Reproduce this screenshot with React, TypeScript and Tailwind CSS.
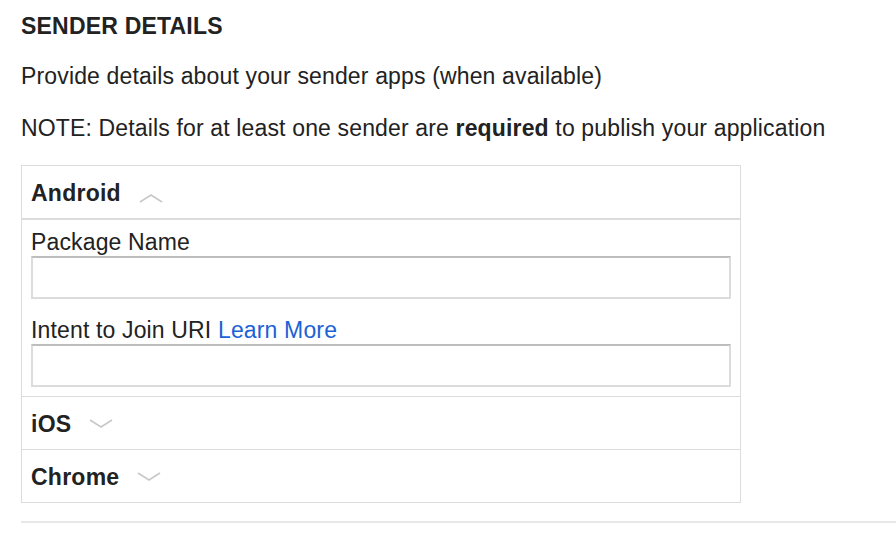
import React from 'react'

const Chevron = ({ up }: { up?: boolean }) => (
  <svg width="24" height="10" viewBox="0 0 24 10" className={up ? 'ml-[18px] mt-[10px]' : 'ml-[18px]'}>
    <polyline
      points={up ? '1,9 12,2 23,9' : '1,1 12,8 23,1'}
      fill="none"
      stroke="#c8c8c8"
      strokeWidth="1.6"
    />
  </svg>
)

const SectionHeader = ({ title, open }: { title: string; open?: boolean }) => (
  <div className="flex items-center h-[52px] px-[9px] pt-[2px]">
    <span className="font-bold text-[23px] leading-[28px] tracking-[0.25px] text-[#222]">{title}</span>
    <Chevron up={open} />
  </div>
)

const TextInput = () => (
  <input
    type="text"
    className="block w-full h-[43px] border-2 border-[#dcdcdc] border-t-[#bdbdbd] bg-white outline-none"
  />
)

const App = () => {
  return (
    <div className="w-[896px] h-[536px] bg-white overflow-hidden font-['Liberation_Sans',Arial,sans-serif] text-[#222]">
      <div className="pl-[21px] pt-[12px]">
        <h2 className="font-bold text-[23px] leading-[28px] tracking-[0.2px]">SENDER DETAILS</h2>
        <p className="text-[23px] leading-[28px] tracking-[0.15px] mt-[22px]">
          Provide details about your sender apps (when available)
        </p>
        <p className="text-[23px] leading-[28px] tracking-[0.15px] mt-[24px]">
          NOTE: Details for at least one sender are <b>required</b> to publish your application
        </p>

        <div className="w-[720px] mt-[23px] border border-[#dcdcdc]">
          <SectionHeader title="Android" open />
          <div className="border-t-2 border-[#dcdcdc] px-[9px] pt-[8px] pb-[9px]">
            <label className="block text-[23px] leading-[28px] tracking-[0.15px]">Package Name</label>
            <TextInput />
            <label className="block text-[23px] leading-[28px] tracking-[0.15px] mt-[17px]">
              Intent to Join URI <a className="text-[#1a62d6]" href="#">Learn More</a>
            </label>
            <TextInput />
          </div>
          <div className="border-t border-[#dcdcdc]">
            <SectionHeader title="iOS" />
          </div>
          <div className="border-t border-[#dcdcdc]">
            <SectionHeader title="Chrome" />
          </div>
        </div>

        <div className="mt-[18px] h-[2px] bg-[#e8e8e8]" />
      </div>
    </div>
  )
}

export default App
